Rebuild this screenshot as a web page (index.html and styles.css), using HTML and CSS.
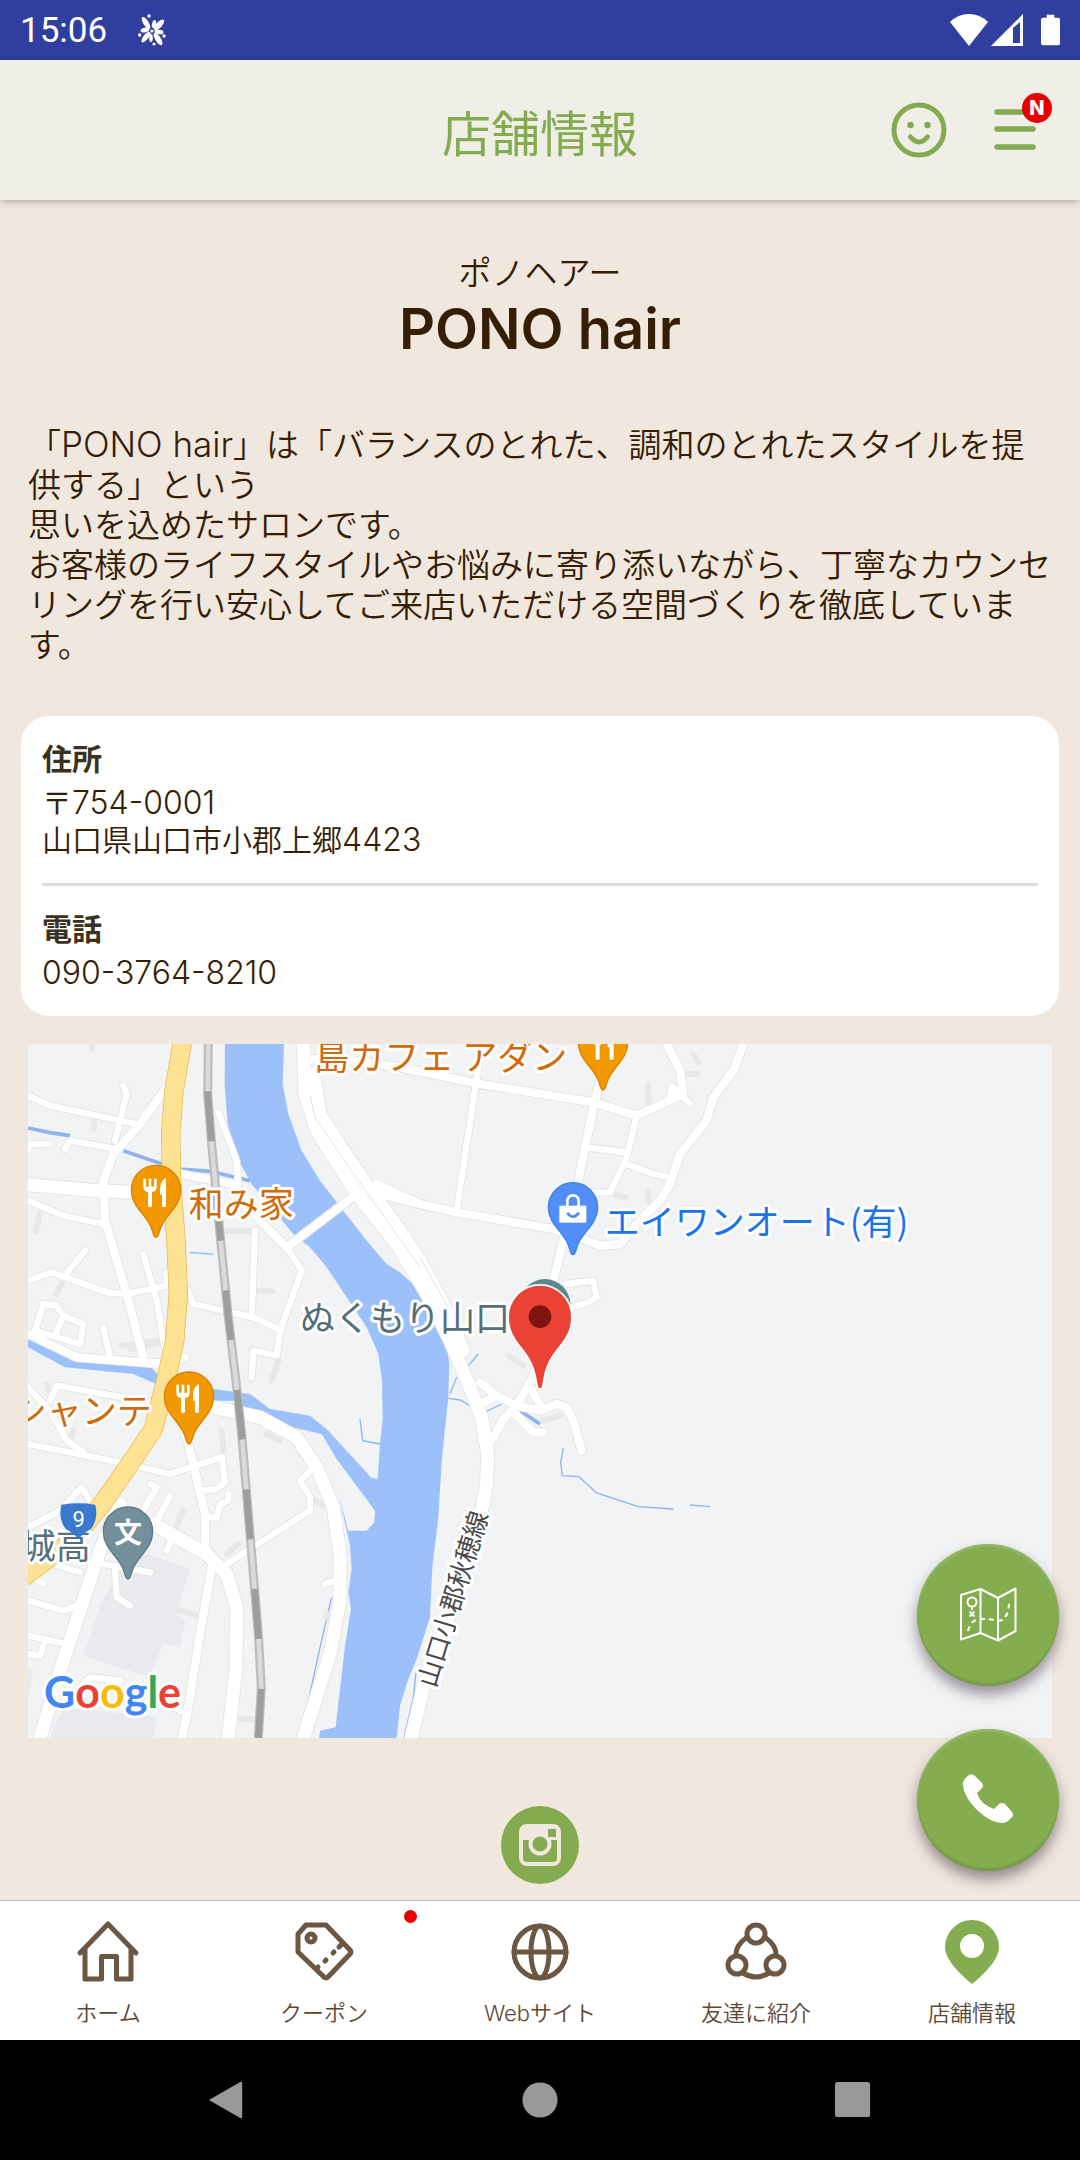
FILE: index.html
```html
<!DOCTYPE html>
<html lang="ja">
<head>
  <meta charset="UTF-8">
  <meta name="viewport" content="width=device-width, initial-scale=1.0">
  <title>店舗情報 - PONO hair</title>
  <link rel="stylesheet" href="styles.css">
</head>
<body>
  <!-- ステータスバー -->
  <div class="status-bar">
    <span class="status-time">15:06</span>
    <svg class="status-flower" viewBox="0 0 28 32" fill="#fff" aria-hidden="true">
      <ellipse cx="16" cy="10" rx="2" ry="4" transform="rotate(15 16 10)"/>
      <ellipse cx="8" cy="9" rx="2.600" ry="7" transform="rotate(-32 8 9)"/>
      <ellipse cx="21" cy="11" rx="2.800" ry="7" transform="rotate(43 21 11)"/>
      <ellipse cx="7" cy="16" rx="2.300" ry="4.500" transform="rotate(76 7 16)"/>
      <ellipse cx="21" cy="18" rx="2.200" ry="4.500" transform="rotate(95 21 18)"/>
      <ellipse cx="8" cy="23" rx="2.600" ry="6.500" transform="rotate(38 8 23)"/>
      <ellipse cx="20" cy="25" rx="2.800" ry="7" transform="rotate(-32 20 25)"/>
      <ellipse cx="13" cy="24" rx="1.800" ry="4"/>
      <circle cx="14" cy="17" r="1.600"/>
      <circle cx="11" cy="2" r="1.700"/><circle cx="1.700" cy="21" r="1.700"/>
      <circle cx="26" cy="22" r="1.700"/><circle cx="16" cy="30" r="1.600"/>
    </svg>
    <div class="status-icons">
      <svg class="status-icon wifi" viewBox="0 0 38 32" fill="#fff" aria-hidden="true"><path d="M19 32 0 8Q8 0 19 0T38 8Z"/></svg>
      <svg class="status-icon signal" viewBox="0 0 32 32" fill="#fff" aria-hidden="true"><path fill-rule="evenodd" d="M0 32 32 0V32ZM22 14V29H29V8Z"/></svg>
      <svg class="status-icon battery" viewBox="0 0 20 32" fill="#fff" aria-hidden="true"><path d="M6 0H14V3H18Q20 3 20 5V30Q20 32 18 32H2Q0 32 0 30V5Q0 3 2 3H6Z"/></svg>
    </div>
  </div>

  <!-- ヘッダー -->
  <header class="header">
    <h1 class="header-title">店舗情報</h1>
    <div class="header-actions">
      <button class="icon-button" type="button" aria-label="マイページ">
        <svg viewBox="0 0 56 56" fill="none" stroke="#84ab50" stroke-width="5" stroke-linecap="round">
          <circle cx="28" cy="28" r="25"/>
          <path d="M19.500 35Q28 45 36.500 35"/>
          <circle cx="19.500" cy="23" r="3.200" fill="#84ab50" stroke="none"/>
          <circle cx="36.500" cy="23" r="3.200" fill="#84ab50" stroke="none"/>
        </svg>
      </button>
      <button class="icon-button menu-button" type="button" aria-label="メニュー">
        <svg viewBox="0 0 42 56" fill="none" stroke="#84ab50" stroke-width="5.500" stroke-linecap="round">
          <path d="M3 10H39M3 27H39M3 45H39"/>
        </svg>
        <span class="badge">N</span>
      </button>
    </div>
  </header>

  <main class="main">
    <section class="shop">
      <p class="shop-kana">ポノヘアー</p>
      <h2 class="shop-name">PONO hair</h2>
      <p class="shop-text">「<span class="latin">PONO hair</span>」は「バランスのとれた、調和のとれたスタイルを提供する」という<br>思いを込めたサロンです。<br>お客様のライフスタイルやお悩みに寄り添いながら、丁寧なカウンセリングを行い安心してご来店いただける空間づくりを徹底しています。</p>
    </section>

    <dl class="card">
      <div class="card-row">
        <dt>住所</dt>
        <dd>〒<span class="number">754-0001</span><br>山口県山口市小郡上郷<span class="number">4423</span></dd>
      </div>
      <div class="card-row">
        <dt>電話</dt>
        <dd><span class="number">090-3764-8210</span></dd>
      </div>
    </dl>

    <!-- 地図 -->
    <svg class="map" viewBox="24 30 3072 2082" role="img" aria-label="店舗周辺の地図">
      <defs>
        <path id="pin" d="M0 142C-6 142-8 134-11 122C-22 76-74 54-74 0A74 74 0 1 1 74 0C74 54 22 76 11 122C8 134 6 142 0 142Z"/>
        <path id="food" d="M-38-34V-10Q-38 4-24 6V48Q-18 56-12 48V6Q2 4 2-10V-34H-6V-10H-14V-34H-22V-10H-30V-34ZM30-36Q12-28 12 0V14H18V48Q24 56 30 48Z"/>
        <g id="roads-s">
          <path d="M24 185 90 215 350 270M310 155 320 180 285 320M24 500 130 545 250 570M135 345 150 320 290 345M24 350 30 330 90 330"/>
          <path d="M24 740 95 715 260 775 320 780 440 755V715M370 660 410 800 435 950M130 730 195 650M70 810 45 890 180 930 190 870 130 845 110 815ZM130 845 105 905M250 880 270 970"/>
          <path d="M595 235 650 380 655 450M705 590 695 850M505 770 520 810 700 850 785 890M800 640 845 710 780 890 770 965 700 950 695 1030"/>
          <path d="M90 1100 110 1055 250 1080 430 1110M24 1060 90 1130 140 1220 190 1255M24 1230 300 1285 450 1320 605 1270 615 1345 590 1365 545 1370M560 1450H590L600 1410 625 1400V1380"/>
          <path d="M870 1310 840 1340 870 1390V1430L620 1590M24 1480 120 1430 185 1360 210 1400M390 1350 410 1360 370 1430M450 1385 400 1480M460 1500 440 1550M250 1590 390 1615M285 1600 290 1690 330 1715"/>
          <path d="M24 1700 130 1730 170 1715M24 1805 140 1830M75 1820 60 1865 24 1860M100 1590 180 1615M24 1620 70 1650M190 1950 210 1930 300 1940M440 2010 500 2040M915 1650 945 1640"/>
          <path d="M1375 100 1310 530M1700 340 1820 355M1850 245 1820 370 1770 475 1700 475M1820 390 1900 420 1950 430M1640 750 1720 740 1730 790 1700 808 1650 820M1990 180 1950 190 1955 155 2010 210"/>
        </g>
        <g id="roads-m">
          <path d="M440 160 360 270 280 360 250 440 255 560 320 780 370 970M24 900 170 970 430 990 495 970M480 420 640 450 720 560 800 640 1010 480M480 1130 520 1290 555 1440V1560M575 1600 540 1800 500 2050 485 2112"/>
          <path d="M860 75 1000 80 1140 100 1380 150 1720 205 1850 245 1990 180 1980 110 1940 30M1740 140 1720 220 1675 440 1590 780M2170 30 2140 110 2080 190 2060 260 1980 360 1950 450 1920 500 1850 570 1800 630 1740 635 1690 615 1600 585 1310 535 1200 510 1040 470 1070 450 1200 510"/>
          <path d="M1380 1045 1430 1085 1490 1115 1560 1130 1610 1110 1640 1120 1660 1160 1685 1250M1550 1000 1530 1045 1490 1115 1450 1155 1415 1220M1485 1140 1540 1195H1570M1530 1060 1565 1120M1395 1105 1430 1085"/>
        </g>
        <g id="roads-l">
          <path d="M24 452 230 470 340 475M580 1120 720 1150 830 1210 890 1300 940 1420 960 1560 960 1700 930 1860 850 2112M400 1470 560 1560 620 1620 650 1720 648 1900 625 2112M300 1410 240 1550 180 1730 130 1880 60 2112"/>
          <path d="M880 120 900 240 970 350 1060 480 1140 590 1200 680 1280 830 1330 950"/>
          <path d="M850 20 855 180 890 290 1010 480 1130 630 1220 780 1290 920 1350 1060 1385 1150 1403 1260 1400 1350 1385 1430 1330 1610 1270 1800 1210 1960 1172 2120"/>
        </g>
      </defs>

      <rect class="land" x="24" y="30" width="3072" height="2082"/>
      <path class="block" d="M340 1545 510 1605 470 1740 495 1760 480 1840 430 1825 390 1930 190 1865 245 1700ZM130 2020 410 2050 400 2112H90ZM24 1900 40 1910 24 2000Z"/>

      <!-- 川 -->
      <path class="water" d="M615 30 614 150 622 260 640 350 695 450 820 600 870 640 920 700 980 790 1040 880 1075 960 1086 1040 1088 1155 1080 1230 1073 1335 1055 1332 920 1185 870 1145 750 1125 690 1080 580 1065 430 1040 390 995 180 975 24 910V940L135 1000 340 1020 430 1060 580 1100 640 1100 750 1165 905 1200 950 1275 1065 1430 1063 1465 1040 1490 985 1490 958 1390 990 1535 995 1605 985 1675 993 1725 975 1835 960 1965 947 2080 900 2090 898 2112H1130L1140 2015 1165 1935 1190 1875 1230 1750 1237 1600 1255 1450 1265 1280 1285 1090 1288 990 1280 930 1250 860 1200 770 1140 715 1100 690 1040 620 970 530 900 440 845 350 805 240 788 150 792 30Z"/>
      <path class="stream wide" d="M24 282 90 296 150 305M310 350 420 388 480 405 570 412 690 440M1500 1130 1560 1170"/>
      <path class="stream" d="M510 655 580 661M1020 1155 1028 1220 1080 1230M935 1690 900 1840 850 2070M1188 1915 1180 1990 1152 2112M1310 1030 1290 1080M1285 1093 1320 1098 1360 1120M1400 1132 1445 1110M1345 995 1375 960M1630 1243 1622 1285 1627 1325 1677 1328 1730 1377 1855 1418 1960 1425M2010 1413 2070 1418"/>

      <!-- 路地 -->
      <path class="alley" d="M215 30V45M222 255V285M60 540 48 590M110 780 130 740M620 590H695M705 772H755M305 935 415 920M330 945 410 930M775 980 755 1040M80 1050 90 1090M605 1190 610 1250M160 1190 150 1220M490 1430 460 1500M620 1560 655 1530M465 1725 535 1745M870 1390 910 1415M920 1740V1750M740 1200 780 1220M660 2055H710M1885 155V205M2035 85 2020 60M2000 120H2030M1885 470V500M1770 475 1815 490M1465 965 1510 995M1570 1160 1620 1145"/>

      <!-- 道路 -->
      <g class="road-casing">
        <use href="#roads-s" stroke-width="24"/>
        <use href="#roads-m" stroke-width="30"/>
        <use href="#roads-l" stroke-width="44"/>
      </g>
      <g class="road">
        <use href="#roads-s" stroke-width="19"/>
        <use href="#roads-m" stroke-width="25"/>
        <use href="#roads-l" stroke-width="39"/>
      </g>
      <path class="road-line" d="M870 185 885 250 970 375 1080 530 1200 700M1200 670 1290 830"/>
      <path class="highway-casing" d="M488 20 462 170 452 300 455 450 468 620 475 780 464 920 440 1030 400 1185 340 1275 250 1405 150 1525 10 1630"/>
      <path class="highway" d="M488 20 462 170 452 300 455 450 468 620 475 780 464 920 440 1030 400 1185 340 1275 250 1405 150 1525 10 1630"/>

      <!-- 線路 -->
      <g class="rail">
        <path class="rail-base" d="M565 30 563 180 575 330 600 600 625 850 650 1060 665 1200 690 1500 715 1800 724 1960 715 2112"/>
        <path class="rail-light" d="M565 30 563 180 575 330 600 600 625 850 650 1060 665 1200 690 1500 715 1800 724 1960 715 2112"/>
        <path class="rail-dash" d="M565 30 563 180 575 330 600 600 625 850 650 1060 665 1200 690 1500 715 1800 724 1960 715 2112"/>
      </g>

      <!-- ラベル -->
      <g class="map-label food-label">
        <text x="883" y="108">島カフェ アダン</text>
        <text x="506" y="550">和み家</text>
        <text x="-25" y="1170">シャンテ</text>
      </g>
      <text class="map-label shop-label" x="1754" y="603">エイワンオート(有)</text>
      <g class="map-label place-label">
        <text x="840" y="890">ぬくもり山口</text>
        <text x="2" y="1575">城高</text>
      </g>
      <text class="map-label road-label" transform="translate(1246 1964) rotate(-73)">山口小郡秋穂線</text>

      <!-- ピン -->
      <g fill="#f29900" stroke="#d98200" stroke-width="4">
        <use href="#pin" x="1749" y="26"/>
        <use href="#pin" x="408" y="468"/>
        <use href="#pin" x="507" y="1088"/>
      </g>
      <g fill="#fff">
        <use href="#food" x="1751" y="26"/>
        <use href="#food" x="408" y="468"/>
        <use href="#food" x="507" y="1086"/>
      </g>
      <use href="#pin" x="1659" y="520" fill="#4f8ff7" stroke="#3f7fe6" stroke-width="4"/>
      <path d="M1618 515H1699V566H1618Z" fill="#fff"/>
      <path d="M1642 518V500Q1644 484 1659 484T1676 500V518" fill="none" stroke="#fff" stroke-width="8"/>
      <path d="M1642 536Q1659 560 1677 536" fill="none" stroke="#4f8ff7" stroke-width="8"/>
      <use href="#pin" x="324" y="1493" fill="#738f9c" stroke="#5c7a88" stroke-width="4"/>
      <text class="school-mark" x="324" y="1526">文</text>
      <path d="M124 1412Q175 1404 226 1412Q236 1455 212 1486Q188 1498 175 1516Q162 1498 138 1486Q114 1455 124 1412Z" fill="#3b78cf"/>
      <text class="route-number" x="176" y="1478">9</text>
      <circle cx="1575" cy="811" r="76" fill="#5f8790"/>
      <path d="M1560 1062C1553 1062 1553 1050 1550 1034C1534 938 1467 932 1467 848A93 93 0 1 1 1653 848C1653 932 1586 938 1570 1034C1567 1050 1567 1062 1560 1062Z" fill="#ea4335" stroke="#fff" stroke-width="10" paint-order="stroke"/>
      <circle cx="1560" cy="848" r="34" fill="#81130f"/>

      <text class="google" x="72" y="2022"><tspan fill="#4285f4">G</tspan><tspan fill="#ea4335">o</tspan><tspan fill="#fbbc04">o</tspan><tspan fill="#4285f4">g</tspan><tspan fill="#34a853">l</tspan><tspan fill="#ea4335">e</tspan></text>
    </svg>

    <a class="sns-link" href="#" aria-label="Instagram">
      <svg viewBox="0 0 78 78">
        <circle cx="39" cy="39" r="39" fill="#84ab50"/>
        <rect x="20" y="20" width="38" height="38" rx="6" fill="none" stroke="#f0e8df" stroke-width="4"/>
        <path d="M19 34V24Q19 19 24 19H54Q59 19 59 24V34Z" fill="#f0e8df"/>
        <circle cx="39" cy="38" r="9.500" fill="#84ab50" stroke="#f0e8df" stroke-width="4"/>
        <rect x="47" y="23" width="8" height="8" fill="#84ab50"/>
      </svg>
    </a>

    <div class="fab-list">
      <a class="fab" href="#" aria-label="地図アプリで開く">
        <svg viewBox="0 0 60 60" fill="none" stroke="#fff" stroke-width="2" stroke-linejoin="round">
          <path d="M3 10 22.500 4 40 13 57.500 3.500V46L40 55.500 22.500 48 3 54.500ZM22.500 4V48M40 13V55.500"/>
          <circle cx="14" cy="17" r="4.500"/>
          <path d="M14 22V25M11.500 26.500 16.500 31.500M16.500 26.500 11.500 31.500"/>
          <path d="M10 46Q13 34 23 34T40 36Q51 35 51 16" stroke-dasharray="5 4"/>
        </svg>
      </a>
      <a class="fab" href="tel:090-3764-8210" aria-label="電話をかける">
        <svg viewBox="0 0 60 60" fill="#fff">
          <path d="M5 12Q6 9 11 5Q14 3 17 6L24 13Q26 16 24 18L19 23Q22 34 36 39L41 34Q44 32 47 34L54 42Q56 45 54 47Q50 52 46 53Q34 54 19 40Q4 25 5 12Z"/>
        </svg>
      </a>
    </div>
  </main>

  <!-- タブメニュー -->
  <nav class="tab-bar">
    <a class="tab" href="#">
      <svg viewBox="0 0 64 64"><path d="M4 33 32 4 60 33M9 29V59H25.500V36.500H40.500V59H55V29"/></svg>
      <span>ホーム</span>
    </a>
    <a class="tab tab-new" href="#">
      <svg viewBox="0 0 64 64"><path d="M6 14 14 5H34L58 30Q60 32 58 34L36 57Q34 59 32 57L6 32Z"/><circle cx="19" cy="18" r="4"/><path d="M49 25 47 27M42 32 41 33M34 40 33 41M26 47 24 49"/></svg>
      <span>クーポン</span>
    </a>
    <a class="tab" href="#">
      <svg viewBox="0 0 64 64"><circle cx="32" cy="32" r="26"/><ellipse cx="32" cy="32" rx="9" ry="26"/><path d="M6 32H58"/></svg>
      <span>Webサイト</span>
    </a>
    <a class="tab" href="#">
      <svg viewBox="0 0 64 64"><circle cx="32" cy="14" r="9"/><circle cx="13" cy="45" r="9"/><circle cx="51" cy="45" r="9"/><path d="M22 18Q12 25 12 35M42 18Q52 25 52 35M19 53Q32 61 45 53"/></svg>
      <span>友達に紹介</span>
    </a>
    <a class="tab tab-active" href="#" aria-current="page">
      <svg viewBox="0 0 64 64"><path fill-rule="evenodd" d="M32 64Q5 42 5 27A27 27 0 0 1 59 27Q59 42 32 64ZM32 14A12 12 0 1 0 32 38A12 12 0 1 0 32 14Z"/></svg>
      <span>店舗情報</span>
    </a>
  </nav>

  <div class="system-bar">
    <button type="button" aria-label="戻る"><svg viewBox="0 0 40 40"><path d="M1 20 34 1Q36 0 36 3V37Q36 40 34 39Z"/></svg></button>
    <button type="button" aria-label="ホーム画面"><svg viewBox="0 0 40 40"><circle cx="20" cy="20" r="18.500"/></svg></button>
    <button type="button" aria-label="アプリ履歴"><svg viewBox="0 0 40 40"><rect x="1" y="1" width="37" height="37" rx="3"/></svg></button>
  </div>
</body>
</html>
```
FILE: styles.css
```css
* {
  box-sizing: border-box;
}
body {
  display: flex;
  flex-direction: column;
  min-height: 100vh;
  margin: 0;
  background-color: #f0e8df;
  color: #351e04;
  font-family: Inter, "Noto Sans CJK JP", sans-serif;
  font-weight: 350;
}
h1, h2, p, dl, dd {
  margin: 0;
}
svg {
  display: block;
}
button {
  padding: 0;
  border: none;
  background: none;
  cursor: pointer;
}

/* ステータスバー */
.status-bar {
  display: flex;
  align-items: center;
  height: 60px;
  padding: 0 20px;
  background-color: #303f9f;
  color: #fff;
}
.status-time {
  font-family: Roboto, sans-serif;
  font-size: 35px;
  font-weight: 400;
}
.status-flower {
  width: 28px;
  height: 32px;
  margin-left: 31px;
}
.status-icons {
  display: flex;
  margin-left: auto;
}
.status-icon {
  height: 32px;
}
.wifi {
  width: 38px;
}
.signal {
  width: 32px;
  margin-left: 3px;
}
.battery {
  width: 19px;
  margin-left: 18px;
}

/* ヘッダー */
.header {
  display: grid;
  grid-template-columns: 1fr auto 1fr;
  align-items: center;
  height: 140px;
  padding: 0 44px;
  background-color: #efefe7;
  box-shadow: 0 1px 8px rgba(0, 0, 0, 0.3);
  z-index: 1;
}
.header-title {
  grid-column: 2;
  color: #84ab50;
  font-size: 49px;
  font-weight: 400;
}
.header-actions {
  display: flex;
  justify-content: flex-end;
  gap: 47px;
}
.icon-button {
  position: relative;
  width: 56px;
  height: 56px;
}
.menu-button {
  width: 42px;
}
.badge {
  position: absolute;
  top: -9px;
  right: -16px;
  width: 30px;
  height: 30px;
  border-radius: 50%;
  background-color: #e60000;
  color: #fff;
  font-family: Inter, sans-serif;
  font-size: 20px;
  font-weight: 800;
  line-height: 30px;
  text-align: center;
}

/* 店舗紹介 */
.main {
  position: relative;
  flex: 1;
}
.shop {
  padding: 49px 28px 51px;
}
.shop-kana {
  font-size: 33px;
  line-height: 48px;
  text-align: center;
}
.shop-name {
  font-size: 56px;
  font-weight: 600;
  line-height: 64px;
  text-align: center;
}
.shop-text {
  margin-top: 64px;
  font-size: 33px;
  line-height: 40px;
}
.latin {
  font-size: 35px;
  line-height: 1;
}
.card {
  margin: 0 21px;
  padding: 0 21px;
  border-radius: 28px;
  background-color: #fff;
}
.card-row {
  padding: 21px 0 24px;
}
.card-row + .card-row {
  border-top: 3px solid #dcdddd;
}
.card dt {
  color: #3a3120;
  font-size: 30px;
  font-weight: 700;
  line-height: 44px;
}
.card dd {
  margin-top: 4px;
  font-size: 30px;
  line-height: 37px;
}
.number {
  font-size: 32px;
  line-height: 1;
}

/* 地図 */
.map {
  width: calc(100% - 56px);
  height: auto;
  margin: 28px auto 0;
}
.land {
  fill: #f1f3f4;
}
.block {
  fill: #e8eaed;
}
.water {
  fill: #9cc0f9;
}
.stream {
  fill: none;
  stroke: #8fb3ee;
  stroke-width: 4;
}
.wide {
  stroke-width: 11;
}
.alley {
  fill: none;
  stroke: #e6e8ea;
  stroke-width: 18;
  stroke-linecap: round;
}
.road, .road-casing {
  fill: none;
  stroke: #fff;
  stroke-linecap: round;
  stroke-linejoin: round;
}
.road-casing {
  stroke: #e1e3e6;
}
.road-line {
  fill: none;
  stroke: #e1e3e6;
  stroke-width: 3;
}
.highway, .highway-casing {
  fill: none;
  stroke: #fde293;
  stroke-width: 54;
  stroke-linejoin: round;
}
.highway-casing {
  stroke: #e8b340;
  stroke-width: 58;
}
.rail {
  fill: none;
  stroke-width: 27;
}
.rail-base {
  stroke: #bdbdbd;
}
.rail-light {
  stroke: #dadbdc;
  stroke-width: 13;
}
.rail-dash {
  stroke: #9e9e9e;
  stroke-width: 20;
  stroke-dasharray: 150 150;
  stroke-dashoffset: -142;
}
.map-label {
  font-family: "Noto Sans CJK JP", sans-serif;
  font-size: 105px;
  font-weight: 400;
  paint-order: stroke;
  stroke: #fff;
  stroke-width: 18;
  stroke-linejoin: round;
}
.food-label {
  fill: #d06a0a;
}
.shop-label {
  fill: #1a73e8;
}
.place-label {
  fill: #546e7a;
}
.road-label {
  fill: #4a4a4a;
  font-size: 78px;
}
.school-mark {
  fill: #fff;
  font-family: "Noto Sans CJK JP", sans-serif;
  font-size: 84px;
  font-weight: 700;
  text-anchor: middle;
}
.route-number {
  fill: #fff;
  font-family: Roboto, sans-serif;
  font-size: 66px;
  font-weight: 400;
  text-anchor: middle;
}
.google {
  font-family: Lato, sans-serif;
  font-size: 129px;
  font-weight: 700;
  paint-order: stroke;
  stroke: #fff;
  stroke-width: 18;
  stroke-linejoin: round;
}
.sns-link {
  display: block;
  width: 78px;
  margin: 68px auto 0;
}

/* 地図・電話ボタン */
.fab-list {
  position: absolute;
  right: 21px;
  bottom: 29px;
  display: flex;
  flex-direction: column;
  gap: 43px;
}
.fab {
  display: flex;
  align-items: center;
  justify-content: center;
  width: 142px;
  height: 142px;
  border-radius: 50%;
  background-color: #84ad50;
  box-shadow: 0 8px 14px rgba(40, 20, 40, 0.45), inset 0 -3px 2px rgba(0, 0, 0, 0.1), inset 0 3px 2px rgba(255, 255, 255, 0.12);
}
.fab svg {
  width: 60px;
  height: 60px;
}

/* タブメニュー */
.tab-bar {
  display: flex;
  height: 140px;
  border-top: 1px solid #c4c0bb;
  background-color: #fff;
}
.tab {
  position: relative;
  display: flex;
  flex: 1;
  flex-direction: column;
  align-items: center;
  padding-top: 19px;
  color: #5c4733;
  font-size: 22px;
  line-height: 32px;
  text-decoration: none;
}
.tab svg {
  width: 64px;
  height: 64px;
  margin-bottom: 13px;
  fill: none;
  stroke: #6b5743;
  stroke-width: 5;
  stroke-linecap: round;
  stroke-linejoin: round;
}
.tab-active svg {
  fill: #84ad50;
  stroke: none;
}
.tab-new::after {
  content: "";
  position: absolute;
  top: 9px;
  right: 15px;
  width: 13px;
  height: 13px;
  border-radius: 50%;
  background-color: #e60000;
}

/* ナビゲーションバー */
.system-bar {
  display: flex;
  align-items: center;
  height: 120px;
  padding: 0 70px;
  background-color: #000;
}
.system-bar button {
  flex: 1;
}
.system-bar svg {
  width: 38px;
  height: 38px;
  margin: 0 auto;
  fill: #999;
}
```
